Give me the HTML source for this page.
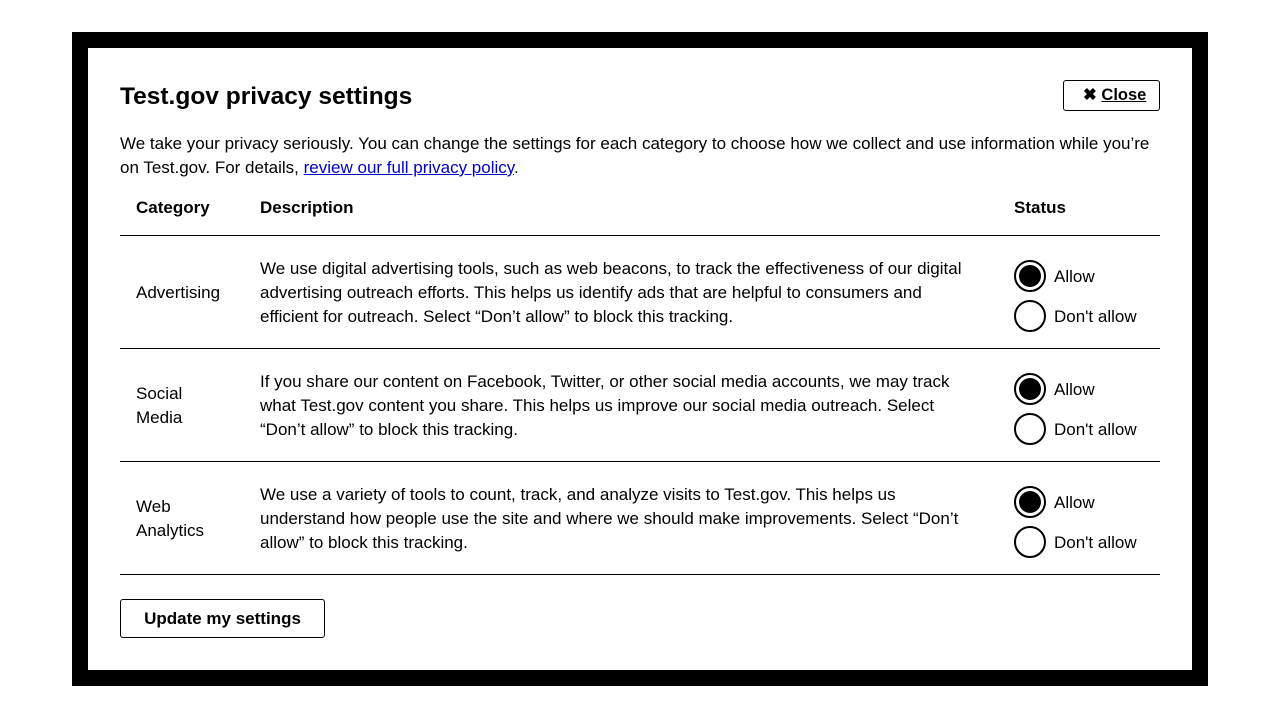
<!DOCTYPE html>
<html><head><style>
*{margin:0;padding:0;box-sizing:border-box}
body{width:1280px;height:720px;background:#fff;font-family:"Liberation Sans",sans-serif;font-size:17px;color:#000;position:relative;overflow:hidden}
.frame{position:absolute;left:72px;top:32px;width:1136px;height:654px;background:#000}
.inner{position:absolute;left:88px;top:48px;width:1104px;height:622px;background:#fff}
.a{position:absolute;white-space:nowrap;line-height:24px}
.b{font-weight:bold}
.hr{position:absolute;left:120px;width:1040px;height:1px;background:#000}
.r{position:absolute;width:32px;height:32px;border:2px solid #000;border-radius:50%;background:#fff}
.r.on::after{content:"";position:absolute;left:3px;top:3px;width:22px;height:22px;border-radius:50%;background:#000}
a{color:#0000cc}
</style></head><body>
<div class="frame"></div><div class="inner"></div>
<div class="a b" style="left:120px;top:83px;font-size:24.5px;line-height:28px">Test.gov privacy settings</div>
<div style="position:absolute;left:1063px;top:80px;width:97px;height:31px;border:1px solid #000;border-radius:3px;font-weight:bold;font-size:16.5px;line-height:29px;padding-left:19px">✖ <u>Close</u></div>
<div class="a" style="left:120px;top:132px">We take your privacy seriously. You can change the settings for each category to choose how we collect and use information while you’re</div>
<div class="a" style="left:120px;top:156px">on Test.gov. For details, <a href="#">review our full privacy policy</a>.</div>
<div class="a b" style="left:136px;top:196px">Category</div>
<div class="a b" style="left:260px;top:196px">Description</div>
<div class="a b" style="left:1014px;top:196px">Status</div>
<div class="hr" style="top:235px"></div>
<div class="hr" style="top:348px"></div>
<div class="hr" style="top:461px"></div>
<div class="hr" style="top:574px"></div>

<div class="a" style="left:136px;top:281px">Advertising</div>
<div class="a" style="left:260px;top:257px">We use digital advertising tools, such as web beacons, to track the effectiveness of our digital</div>
<div class="a" style="left:260px;top:281px">advertising outreach efforts. This helps us identify ads that are helpful to consumers and</div>
<div class="a" style="left:260px;top:305px">efficient for outreach. Select “Don’t allow” to block this tracking.</div>

<div class="a" style="left:136px;top:382px">Social</div>
<div class="a" style="left:136px;top:406px">Media</div>
<div class="a" style="left:260px;top:370px">If you share our content on Facebook, Twitter, or other social media accounts, we may track</div>
<div class="a" style="left:260px;top:394px">what Test.gov content you share. This helps us improve our social media outreach. Select</div>
<div class="a" style="left:260px;top:418px">“Don’t allow” to block this tracking.</div>

<div class="a" style="left:136px;top:495px">Web</div>
<div class="a" style="left:136px;top:519px">Analytics</div>
<div class="a" style="left:260px;top:483px">We use a variety of tools to count, track, and analyze visits to Test.gov. This helps us</div>
<div class="a" style="left:260px;top:507px">understand how people use the site and where we should make improvements. Select “Don’t</div>
<div class="a" style="left:260px;top:531px">allow” to block this tracking.</div>

<div class="r on" style="left:1014px;top:260px"></div><div class="a" style="left:1054px;top:265px">Allow</div>
<div class="r" style="left:1014px;top:300px"></div><div class="a" style="left:1054px;top:305px">Don't allow</div>
<div class="r on" style="left:1014px;top:373px"></div><div class="a" style="left:1054px;top:378px">Allow</div>
<div class="r" style="left:1014px;top:413px"></div><div class="a" style="left:1054px;top:418px">Don't allow</div>
<div class="r on" style="left:1014px;top:486px"></div><div class="a" style="left:1054px;top:491px">Allow</div>
<div class="r" style="left:1014px;top:526px"></div><div class="a" style="left:1054px;top:531px">Don't allow</div>

<div style="position:absolute;left:120px;top:599px;width:205px;height:39px;border:1px solid #000;border-radius:3px;font-weight:bold;text-align:center;line-height:38px">Update my settings</div>
</body></html>
